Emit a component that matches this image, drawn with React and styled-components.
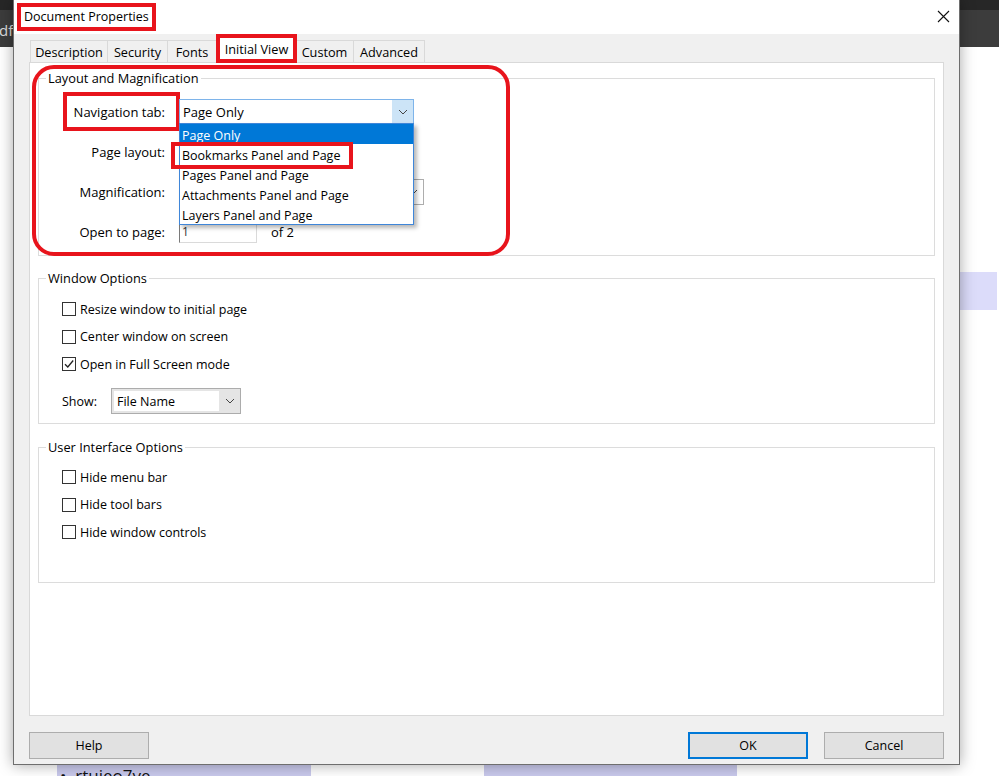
import React from "react";
import styled, { createGlobalStyle, css } from "styled-components";

const RED = "#e8141c";

const Global = createGlobalStyle`
  html, body { margin: 0; padding: 0; background: #fff; }
  body { font-family: "Open Sans", "Noto Sans", Arial, sans-serif; }
  * { box-sizing: border-box; }
`;

const Desktop = styled.div`
  position: relative;
  width: 999px;
  height: 776px;
  overflow: hidden;
  background: #fff;
`;

const AppTop = styled.div`
  height: 10px;
  background: #272727;
`;

const AppHeader = styled.div`
  height: 37px;
  background: #3c3c3c;
  color: #dedede;
  font-size: 15px;
  line-height: 40px;
  text-indent: -1px;
`;

const BgHighlight = styled.div`
  position: absolute;
  left: ${(p) => p.$left}px;
  top: ${(p) => p.$top}px;
  width: ${(p) => p.$width}px;
  height: ${(p) => p.$height}px;
  background: ${(p) => p.$color};
  color: #111;
  font-size: 17px;
  line-height: 20px;
  padding-left: 3px;
  padding-top: 1px;
  white-space: nowrap;
`;

const Dialog = styled.div`
  position: absolute;
  left: 13px;
  top: 0;
  width: 947px;
  height: 765px;
  border: 1px solid #6e6e6e;
  border-top: none;
  background: #f0f0f0;
  box-shadow: 0 0 14px rgba(0, 0, 0, 0.35);
  display: flex;
  flex-direction: column;
  font-size: 12.5px;
  color: #000;
`;

const TitleBar = styled.div`
  height: 34px;
  background: #fff;
  display: flex;
  align-items: center;
  justify-content: space-between;
  padding-left: 3px;
`;

const TitleText = styled.span`
  display: inline-block;
  border: 4px solid ${RED};
  padding: 2px 3px;
  line-height: 16px;
  font-size: 12.5px;
`;

const CloseBtn = styled.div`
  width: 13px;
  height: 13px;
  margin-right: 9px;
  margin-top: -2px;
  display: flex;
`;

const Body = styled.div`
  flex: 1;
  display: flex;
  flex-direction: column;
  padding: 0 15px 5px 15px;
`;

const TabRow = styled.div`
  height: 28px;
  display: flex;
  align-items: flex-end;
  padding-left: 2px;
`;

const Tab = styled.div`
  position: relative;
  width: ${(p) => p.$w}px;
  height: 22px;
  margin-left: -1px;
  border: 1px solid #d9d9d9;
  border-bottom: none;
  background: #f0f0f0;
  display: flex;
  align-items: center;
  justify-content: center;
  white-space: nowrap;
  font-size: 12.7px;
  ${(p) =>
    p.$active &&
    css`
      height: 27px;
      margin-bottom: -1px;
      margin-left: 1px;
      margin-right: 1px;
      background: #fff;
      z-index: 2;
      padding-bottom: 3px;
    `}
  ${(p) =>
    p.$marked &&
    css`
      &::after {
        content: "";
        position: absolute;
        left: -3px;
        right: -3px;
        top: -3px;
        bottom: 0px;
        border: 4px solid ${RED};
      }
    `}
`;

const Panel = styled.div`
  position: relative;
  height: 654px;
  background: #fff;
  border: 1px solid #d9d9d9;
  padding: 7px 8px 0 8px;
  display: flex;
  flex-direction: column;
`;

const Group = styled.fieldset`
  margin: ${(p) => p.$mt || 0}px 0 0 0;
  padding: 0;
  border: 1px solid #dcdcdc;
  min-width: 0;
`;

const Legend = styled.legend`
  margin-left: 7px;
  padding: 0 2px;
  line-height: 16px;
  font-size: 12.8px;
`;

const FormGrid = styled.div`
  display: grid;
  grid-template-columns: 126px auto;
  column-gap: 14px;
  grid-auto-rows: 25px;
  row-gap: 15px;
  padding: 13px 0 11px 0;
`;

const FieldLabel = styled.div`
  display: flex;
  align-items: center;
  justify-content: flex-end;
  font-size: 13px;
`;

const LabelText = styled.span`
  position: relative;
  line-height: 16px;
  ${(p) =>
    p.$marked &&
    css`
      &::after {
        content: "";
        position: absolute;
        left: -11px;
        right: -15px;
        top: -12px;
        bottom: -11px;
        border: 4px solid ${RED};
      }
    `}
`;

const FieldCell = styled.div`
  position: relative;
  display: flex;
  align-items: center;
  gap: 14px;
`;

const Select = styled.div`
  position: relative;
  width: ${(p) => p.$w}px;
  height: ${(p) => p.$h || 25}px;
  border: 1px solid ${(p) => (p.$focus ? "#7eb4ea" : "#adadad")};
  background: #fff;
  display: flex;
  align-items: stretch;
`;

const SelectValue = styled.div`
  flex: 1;
  display: flex;
  align-items: center;
  padding-left: 3px;
  font-size: 13px;
`;

const SelectArrow = styled.div`
  width: 21px;
  display: flex;
  align-items: center;
  justify-content: center;
  background: ${(p) => p.$bg || "transparent"};
`;

const Dropdown = styled.div`
  position: absolute;
  left: -1px;
  top: 100%;
  width: 235px;
  border: 1px solid #3f86d9;
  background: #fff;
  box-shadow: 3px 3px 4px rgba(0, 0, 0, 0.28);
  z-index: 5;
`;

const Option = styled.div`
  height: 20px;
  display: flex;
  align-items: center;
  padding: 3px 0 0 2px;
  font-size: 12.5px;
  white-space: nowrap;
  ${(p) =>
    p.$selected &&
    css`
      background: #0078d7;
      color: #fff;
    `}
`;

const OptionText = styled.span`
  position: relative;
  ${(p) =>
    p.$marked &&
    css`
      &::after {
        content: "";
        position: absolute;
        left: -11px;
        right: -13px;
        top: -5px;
        bottom: -5px;
        border: 4px solid ${RED};
      }
    `}
`;

const PageInput = styled.div`
  width: 78px;
  height: 22px;
  border: 1px solid #dadada;
  border-left: 1px solid #7a7a7a;
  border-top: 1px solid #9a9a9a;
  display: flex;
  align-items: center;
  padding-left: 2px;
  font-size: 12px;
  color: #333;
`;

const PageCount = styled.span`
  font-size: 13px;
`;

const CheckList = styled.div`
  display: flex;
  flex-direction: column;
  gap: 7.5px;
  padding: ${(p) => p.$pad};
`;

const CheckRow = styled.label`
  height: 20px;
  display: flex;
  align-items: center;
  gap: 4px;
  font-size: 12.5px;
`;

const Box = styled.span`
  width: 14px;
  height: 14px;
  border: 1px solid #333;
  background: #fff;
  display: flex;
  align-items: center;
  justify-content: center;
`;

const ShowRow = styled.div`
  margin-top: 6.5px;
  display: flex;
  align-items: center;
`;

const ShowLabel = styled.span`
  width: 49px;
  font-size: 12.5px;
`;

const ShowSelect = styled.div`
  width: 130px;
  height: 26px;
  border: 1px solid #acacac;
  background: #e5e5e5;
  display: flex;
  padding: 2px 0 2px 2px;
`;

const ShowValue = styled.div`
  flex: 1;
  background: #fff;
  display: flex;
  align-items: center;
  padding-left: 3px;
  font-size: 12.5px;
`;

const AnnotRing = styled.div`
  position: absolute;
  left: 2px;
  top: 2px;
  width: 478px;
  height: 191px;
  border: 4px solid ${RED};
  border-radius: 22px;
  pointer-events: none;
  z-index: 6;
`;

const Footer = styled.div`
  display: flex;
  justify-content: space-between;
  padding-top: 16px;
`;

const ButtonGroup = styled.div`
  display: flex;
  gap: 16px;
`;

const Button = styled.div`
  width: 120px;
  height: 27px;
  background: #e1e1e1;
  border: 1px solid #adadad;
  display: flex;
  align-items: center;
  justify-content: center;
  font-size: 12.5px;
  ${(p) =>
    p.$default &&
    css`
      border: 2px solid #0078d7;
    `}
`;

const Chevron = ({ color = "#444" }) => (
  <svg width="10" height="6" viewBox="0 0 10 6">
    <path d="M1 1 L5 5 L9 1" fill="none" stroke={color} strokeWidth="1" />
  </svg>
);

const Check = () => (
  <svg width="12" height="12" viewBox="0 0 12 12">
    <path d="M2 6.2 L4.8 9 L10.2 2.5" fill="none" stroke="#222" strokeWidth="1.3" />
  </svg>
);

const CheckItem = ({ checked, children }) => (
  <CheckRow>
    <Box>{checked && <Check />}</Box>
    {children}
  </CheckRow>
);

export default function App() {
  const tabs = [
    { label: "Description", w: 78 },
    { label: "Security", w: 61 },
    { label: "Fonts", w: 50 },
    { label: "Initial View", w: 77, active: true },
    { label: "Custom", w: 59 },
    { label: "Advanced", w: 72 },
  ];
  const navOptions = [
    "Page Only",
    "Bookmarks Panel and Page",
    "Pages Panel and Page",
    "Attachments Panel and Page",
    "Layers Panel and Page",
  ];
  return (
    <>
      <Global />
      <Desktop>
        <AppTop />
        <AppHeader>df</AppHeader>
        <BgHighlight $left={960} $top={272} $width={37} $height={38} $color="#dcdcfa" />
        <BgHighlight $left={57} $top={765} $width={254} $height={20} $color="#c9c9ec">
          •&nbsp;&nbsp;rtuieo7ye
        </BgHighlight>
        <BgHighlight $left={484} $top={765} $width={253} $height={20} $color="#c9c9ec" />

        <Dialog>
          <TitleBar>
            <TitleText>Document Properties</TitleText>
            <CloseBtn>
              <svg width="13" height="13" viewBox="0 0 13 13">
                <path d="M1 1 L12 12 M12 1 L1 12" stroke="#111" strokeWidth="1.1" />
              </svg>
            </CloseBtn>
          </TitleBar>
          <Body>
            <TabRow>
              {tabs.map((t) => (
                <Tab key={t.label} $w={t.w} $active={t.active} $marked={t.active}>
                  {t.label}
                </Tab>
              ))}
            </TabRow>
            <Panel>
              <AnnotRing />
              <Group>
                <Legend>Layout and Magnification</Legend>
                <FormGrid>
                  <FieldLabel>
                    <LabelText $marked>Navigation tab:</LabelText>
                  </FieldLabel>
                  <FieldCell>
                    <Select $w={235} $focus>
                      <SelectValue>Page Only</SelectValue>
                      <SelectArrow $bg="#cce4f7">
                        <Chevron />
                      </SelectArrow>
                      <Dropdown>
                        {navOptions.map((o, i) => (
                          <Option key={o} $selected={i === 0}>
                            <OptionText $marked={i === 1}>{o}</OptionText>
                          </Option>
                        ))}
                      </Dropdown>
                    </Select>
                  </FieldCell>

                  <FieldLabel>
                    <LabelText>Page layout:</LabelText>
                  </FieldLabel>
                  <FieldCell>
                    <Select $w={235}>
                      <SelectValue />
                      <SelectArrow>
                        <Chevron />
                      </SelectArrow>
                    </Select>
                  </FieldCell>

                  <FieldLabel>
                    <LabelText>Magnification:</LabelText>
                  </FieldLabel>
                  <FieldCell>
                    <Select $w={245} $h={26}>
                      <SelectValue />
                      <SelectArrow>
                        <Chevron />
                      </SelectArrow>
                    </Select>
                  </FieldCell>

                  <FieldLabel>
                    <LabelText>Open to page:</LabelText>
                  </FieldLabel>
                  <FieldCell>
                    <PageInput>1</PageInput>
                    <PageCount>of 2</PageCount>
                  </FieldCell>
                </FormGrid>
              </Group>

              <Group $mt={14}>
                <Legend>Window Options</Legend>
                <CheckList $pad="13px 0 9px 23px">
                  <CheckItem>Resize window to initial page</CheckItem>
                  <CheckItem>Center window on screen</CheckItem>
                  <CheckItem checked>Open in Full Screen mode</CheckItem>
                  <ShowRow>
                    <ShowLabel>Show:</ShowLabel>
                    <ShowSelect>
                      <ShowValue>File Name</ShowValue>
                      <SelectArrow>
                        <Chevron />
                      </SelectArrow>
                    </ShowSelect>
                  </ShowRow>
                </CheckList>
              </Group>

              <Group $mt={15}>
                <Legend>User Interface Options</Legend>
                <CheckList $pad="12px 0 40px 23px">
                  <CheckItem>Hide menu bar</CheckItem>
                  <CheckItem>Hide tool bars</CheckItem>
                  <CheckItem>Hide window controls</CheckItem>
                </CheckList>
              </Group>
            </Panel>
            <Footer>
              <Button>Help</Button>
              <ButtonGroup>
                <Button $default>OK</Button>
                <Button>Cancel</Button>
              </ButtonGroup>
            </Footer>
          </Body>
        </Dialog>
      </Desktop>
    </>
  );
}
